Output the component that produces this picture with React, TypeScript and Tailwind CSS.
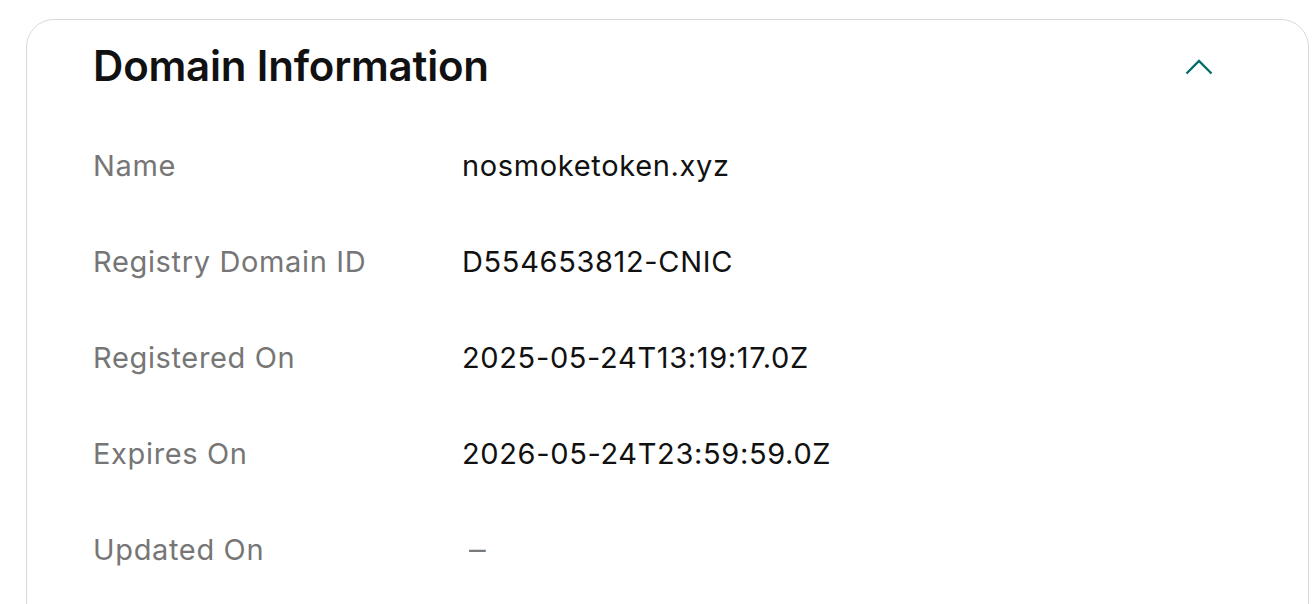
interface Row {
  label: string
  value: string
  empty?: boolean
}

const rows: Row[] = [
  { label: 'Name', value: 'nosmoketoken.xyz' },
  { label: 'Registry Domain ID', value: 'D554653812-CNIC' },
  { label: 'Registered On', value: '2025-05-24T13:19:17.0Z' },
  { label: 'Expires On', value: '2026-05-24T23:59:59.0Z' },
  { label: 'Updated On', value: '–', empty: true },
]

export default function App() {
  return (
    <div className="w-[1314px] h-[604px] overflow-hidden bg-white pt-[19px] pl-[26px] pr-[5px] font-['Inter',sans-serif]">
      <section className="border-[1.5px] border-[#d4d9df] rounded-[28px] h-[640px] pl-[66px] pr-[94px]">
        {/* Header */}
        <div className="flex items-center justify-between h-[94px]">
          <h2 className="text-[42px] font-semibold text-[#111111] tracking-[-0.2px] mb-[4px]">Domain Information</h2>
          <svg width="28" height="16" viewBox="0 0 28 16" fill="none" className="mr-[1px]">
            <path d="M1.5 14.5 14 2 26.5 14.5" stroke="#00706b" strokeWidth="2.4" />
          </svg>
        </div>

        {/* Details */}
        <dl className="flex flex-col">
          {rows.map((r) => (
            <div key={r.label} className="flex items-center h-[96px] first:mt-[4px] text-[29px] tracking-[0.65px]">
              <dt className="w-[369px] text-[#767676]">{r.label}</dt>
              <dd className={r.empty ? 'ml-[7px] text-[#7a7a7a] scale-x-[1.15] origin-left' : 'text-[#111111]'}>
                {r.value}
              </dd>
            </div>
          ))}
        </dl>
      </section>
    </div>
  )
}
